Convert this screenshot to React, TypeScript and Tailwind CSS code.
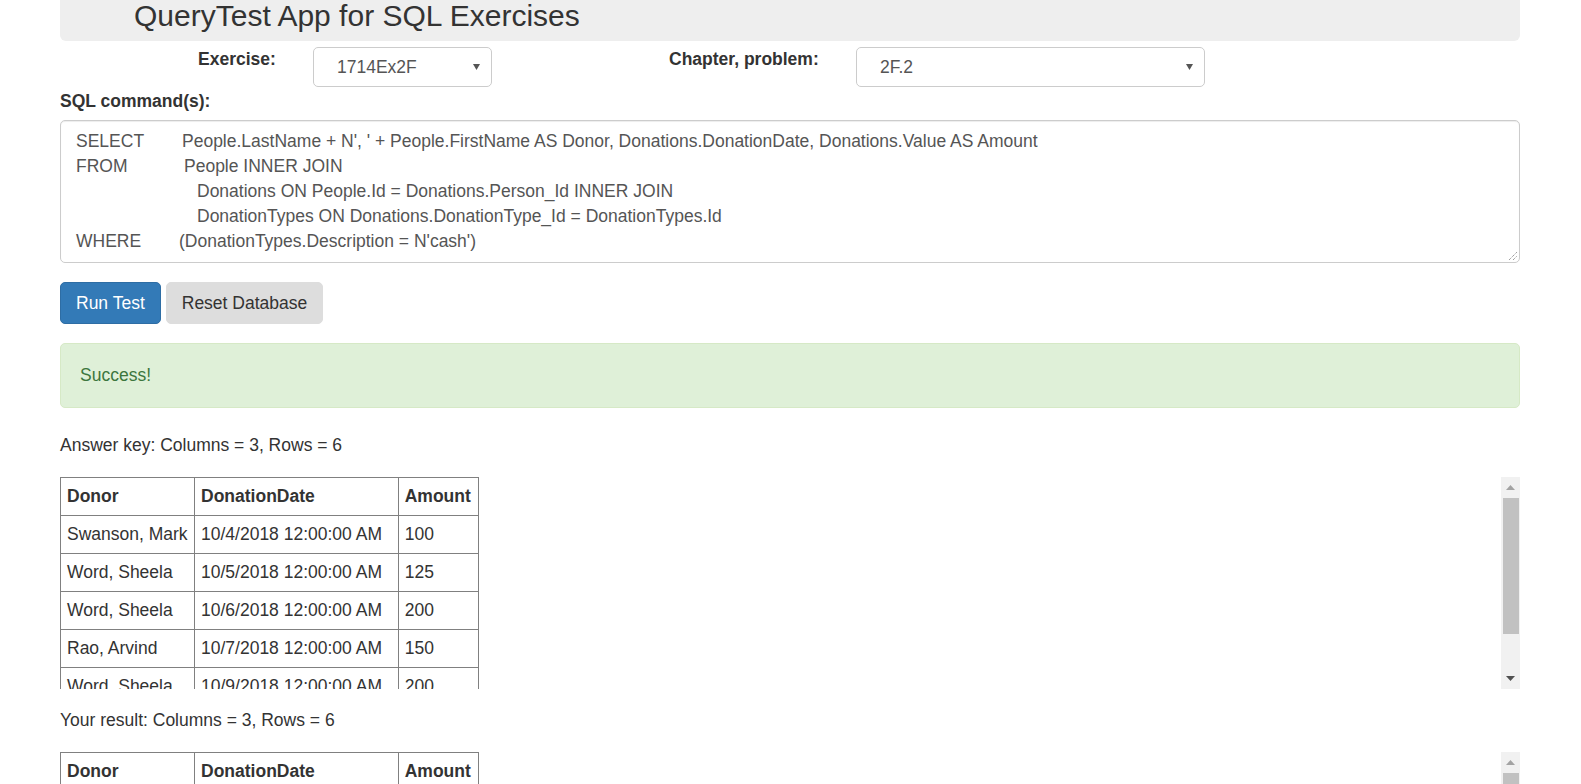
import React from 'react';

const rows = [
  ["Swanson, Mark", "10/4/2018 12:00:00 AM", "100"],
  ["Word, Sheela", "10/5/2018 12:00:00 AM", "125"],
  ["Word, Sheela", "10/6/2018 12:00:00 AM", "200"],
  ["Rao, Arvind", "10/7/2018 12:00:00 AM", "150"],
  ["Word, Sheela", "10/9/2018 12:00:00 AM", "200"],
  ["Rao, Arvind", "10/10/2018 12:00:00 AM", "75"]
];

const SelectBox = ({ value, width }: { value: string; width: string }) => (
  <div className={`${width} h-[40px] shrink-0 border border-[#ccc] rounded-[5px] bg-white flex items-center justify-between pl-[23px] pr-[11px] text-[#555]`}>
    <span>{value}</span>
    <svg width="7" height="6" viewBox="0 0 7 6">
      <polygon points="0,0 7,0 3.5,6" fill="#555" />
    </svg>
  </div>
);

const FakeScrollbar = ({ thumbHeight }: { thumbHeight: string }) => (
  <div className="w-[19px] shrink-0 bg-[#f1f1f1] flex flex-col">
    <div className="h-[21px] flex items-center justify-center">
      <svg width="9" height="5" viewBox="0 0 9 5">
        <polygon points="0,5 9,5 4.5,0" fill="#a3a3a3" />
      </svg>
    </div>
    <div className={`${thumbHeight} ml-[2px] mr-[1px] bg-[#c1c1c1]`} />
    <div className="flex-1" />
    <div className="h-[21px] flex items-center justify-center">
      <svg width="9" height="5" viewBox="0 0 9 5">
        <polygon points="0,0 9,0 4.5,5" fill="#505050" />
      </svg>
    </div>
  </div>
);

const ResultTable = () => (
  <table className="border-collapse border border-[#808080]">
    <thead>
      <tr>
        <th className="w-[134px] border border-[#808080] px-[6px] py-[6px] text-left font-bold">Donor</th>
        <th className="w-[203px] border border-[#808080] px-[6px] py-[6px] text-left font-bold">DonationDate</th>
        <th className="w-[80px] border border-[#808080] px-[6px] py-[6px] text-left font-bold">Amount</th>
      </tr>
    </thead>
    <tbody>
      {rows.map((r, i) => (
        <tr key={i}>
          {r.map((c, j) => (
            <td key={j} className="border border-[#808080] px-[6px] py-[6px] whitespace-nowrap">{c}</td>
          ))}
        </tr>
      ))}
    </tbody>
  </table>
);

const App = () => {
  return (
    <div className="h-[784px] overflow-hidden bg-white font-['Liberation_Sans',Arial,sans-serif] text-[#333] text-[17.5px] leading-[25px]">
      <div className="ml-[60px] w-[1460px]">
        {/* Header */}
        <div className="h-[41px] bg-[#eee] rounded-b-[6px] pl-[74px]">
          <h1 className="text-[30px] leading-[32px] font-normal">QueryTest App for SQL Exercises</h1>
        </div>

        {/* Exercise pickers */}
        <div className="flex items-start mt-[6px]">
          <label className="ml-[138px] w-[115px] font-bold">Exercise:</label>
          <SelectBox value="1714Ex2F" width="w-[179px]" />
          <label className="ml-[177px] w-[187px] font-bold">Chapter, problem:</label>
          <SelectBox value="2F.2" width="w-[349px]" />
        </div>

        <div className="mt-[2px] font-bold">SQL command(s):</div>

        {/* SQL text */}
        <div className="relative mt-[6px] h-[143px] border border-[#ccc] rounded-[5px] px-[15px] py-[8px] text-[#555] whitespace-nowrap shadow-[inset_0_1px_1px_rgba(0,0,0,0.075)]">
          <div><span className="inline-block w-[106px]">SELECT</span>People.LastName + N&#39;, &#39; + People.FirstName AS Donor, Donations.DonationDate, Donations.Value AS Amount</div>
          <div><span className="inline-block w-[108px]">FROM</span>People INNER JOIN</div>
          <div><span className="inline-block w-[121px]"></span>Donations ON People.Id = Donations.Person_Id INNER JOIN</div>
          <div><span className="inline-block w-[121px]"></span>DonationTypes ON Donations.DonationType_Id = DonationTypes.Id</div>
          <div><span className="inline-block w-[103px]">WHERE</span>(DonationTypes.Description = N&#39;cash&#39;)</div>
          <svg className="absolute right-[2px] bottom-[2px]" width="9" height="9" viewBox="0 0 9 9">
            <line x1="1" y1="9" x2="9" y2="1" stroke="#777" strokeWidth="1" strokeDasharray="1 1" />
            <line x1="5" y1="9" x2="9" y2="5" stroke="#777" strokeWidth="1" strokeDasharray="1 1" />
          </svg>
        </div>

        {/* Buttons */}
        <div className="flex gap-[5px] mt-[19px]">
          <button className="h-[42px] px-[15px] rounded-[5px] bg-[#337ab7] border border-[#2e6da4] text-white">Run Test</button>
          <button className="h-[42px] px-[15px] rounded-[5px] bg-[#ddd] border border-[#ddd] text-[#333]">Reset Database</button>
        </div>

        {/* Alert */}
        <div className="mt-[19px] h-[65px] border border-[#d6e9c6] bg-[#dff0d8] text-[#3c763d] rounded-[5px] px-[19px] flex items-center">
          Success!
        </div>

        <div className="mt-[25px]">Answer key: Columns = 3, Rows = 6</div>

        <div className="mt-[19px] flex h-[212px]">
          <div className="flex-1 overflow-hidden">
            <ResultTable />
          </div>
          <FakeScrollbar thumbHeight="h-[136px]" />
        </div>

        <div className="mt-[19px]">Your result: Columns = 3, Rows = 6</div>

        <div className="mt-[19px] flex h-[212px]">
          <div className="flex-1 overflow-hidden">
            <ResultTable />
          </div>
          <FakeScrollbar thumbHeight="h-[136px]" />
        </div>
      </div>
    </div>
  );
};

export default App;
